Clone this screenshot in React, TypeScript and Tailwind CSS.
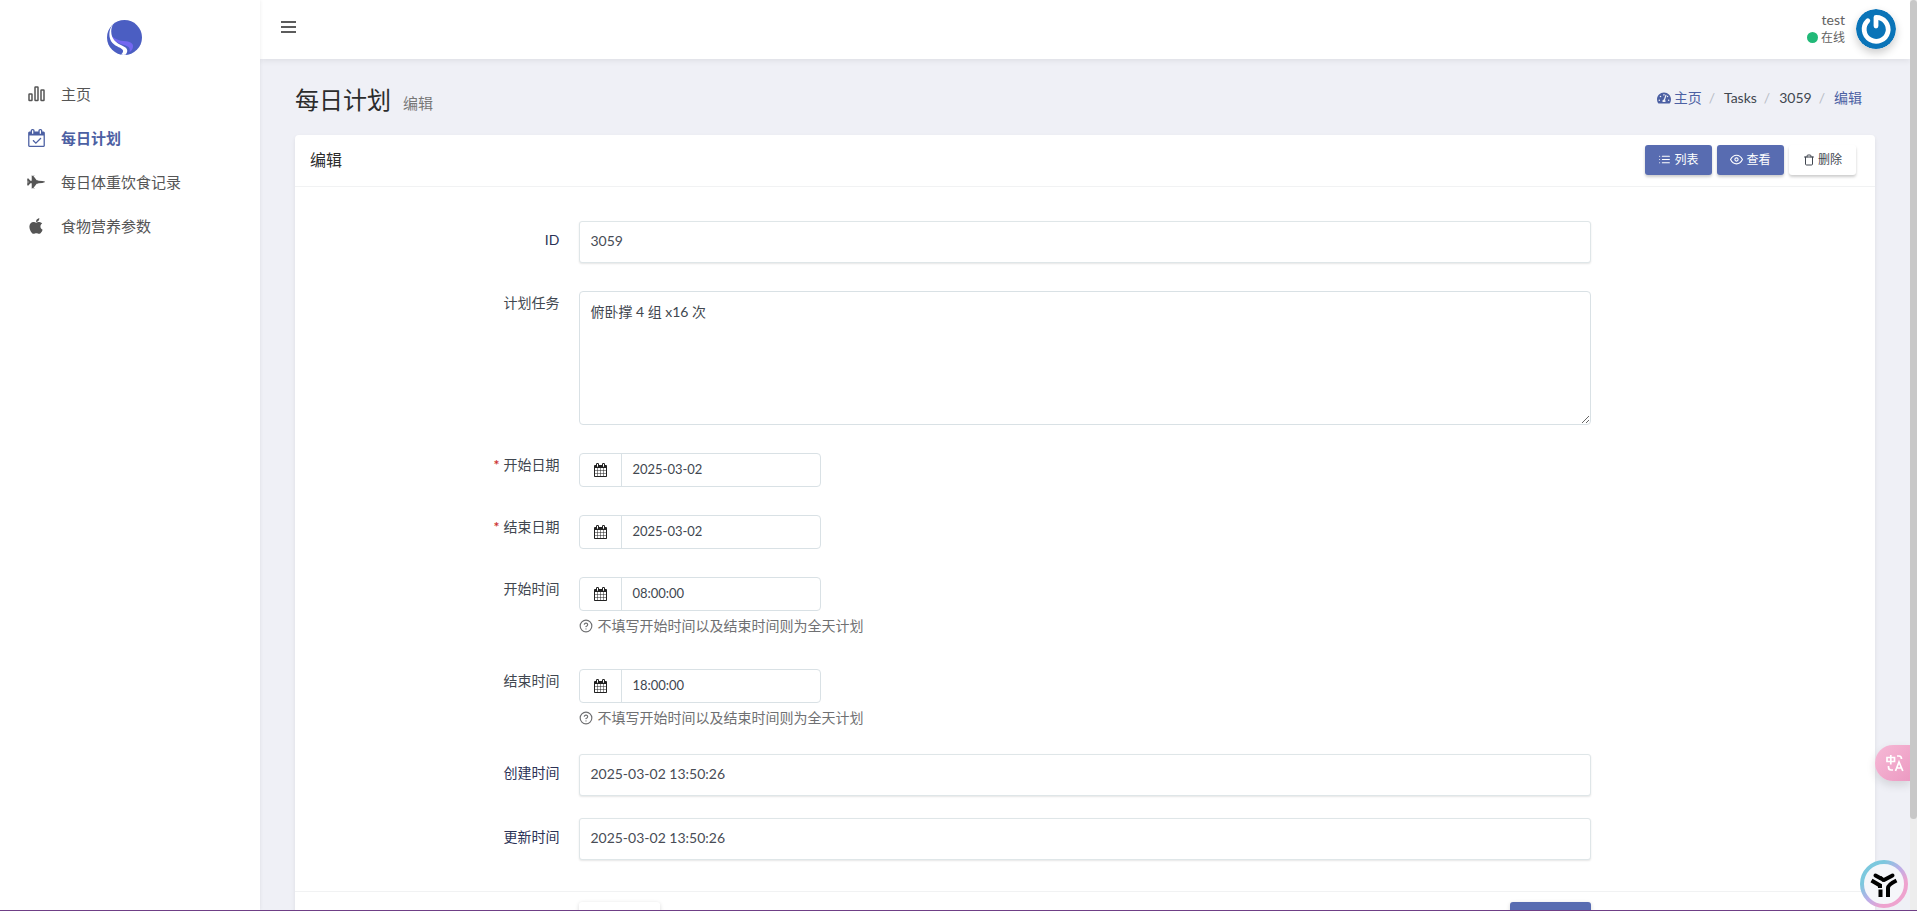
import React from "react";
import { FaApple, FaFighterJet, FaTachometerAlt } from "react-icons/fa";
import { FiEye, FiHelpCircle, FiList, FiTrash } from "react-icons/fi";

const Logo: React.FC = () => (
  <svg width="35" height="35" viewBox="0 0 35 35" fill="none">
    <circle cx="17.5" cy="17.5" r="17.5" fill="#4b5ec2" />
    <path
      d="M3.500 14C6 19 12 20.800 19 21.300C24 21.800 26.500 24 26 27C25.500 29.500 24.200 31.300 22.500 32C23.500 28 22 26.500 17 25C10 23 5 20 3.500 14Z"
      fill="#7367f0"
    />
    <path
      d="M6 4.500C1.500 9 1 18 5.500 23C9 27 15 27.500 16 30.500C16.300 32 15.300 33.500 14 34.600C16 35.100 17.500 35 18.500 34.800C20.500 32.500 21 29.500 18.800 27.700C16 25.500 11 24.500 7.500 20.500C4 16.500 3 10 6 4.500Z"
      fill="white"
    />
  </svg>
);

const BarsIcon: React.FC = () => (
  <svg width="17" height="16" viewBox="0 0 17 16" fill="none" stroke="#555" strokeWidth="1.500">
    <rect x="1" y="8" width="3" height="6.500" rx="0.500" />
    <rect x="7" y="1" width="3" height="13.500" rx="0.500" />
    <rect x="13" y="4" width="3" height="10.500" rx="0.500" />
  </svg>
);

const CalendarCheckIcon: React.FC = () => (
  <svg width="17" height="18" viewBox="0 0 1664 1792" fill="currentColor">
    <path d="M1303 964l-512 512q-10 9-23 9t-23-9l-288-288q-9-10-9-23t9-22l46-46q9-9 22-9t23 9l220 220 444-444q10-9 23-9t22 9l46 46q9 9 9 22t-9 23zm-1175 700h1408v-1024h-1408v1024zm384-1216v-288q0-13-9.500-22.500t-22.500-9.500h-64q-13 0-22.500 9.500t-9.500 22.500v288q0 13 9.500 22.500t22.500 9.500h64q13 0 22.500-9.500t9.500-22.500zm768 0v-288q0-13-9.500-22.500t-22.500-9.500h-64q-13 0-22.500 9.500t-9.500 22.500v288q0 13 9.500 22.500t22.500 9.500h64q13 0 22.500-9.500t9.500-22.500zm384-64v1280q0 52-38 90t-90 38h-1408q-52 0-90-38t-38-90v-1280q0-52 38-90t90-38h128v-96q0-66 47-113t113-47h64q66 0 113 47t47 113v96h384v-96q0-66 47-113t113-47h64q66 0 113 47t47 113v96h128q52 0 90 38t38 90z" />
  </svg>
);

const CalendarIcon: React.FC = () => (
  <svg width="13" height="14" viewBox="0 0 1664 1792" fill="#222">
    <path d="M128 1664h288v-288h-288v288zm352 0h320v-288h-320v288zm-352-352h288v-320h-288v320zm352 0h320v-320h-320v320zm-352-384h288v-288h-288v288zm736 736h320v-288h-320v288zm-384-736h320v-288h-320v288zm768 736h288v-288h-288v288zm-384-352h320v-320h-320v320zm-352-864v-288q0-13-9.500-22.500t-22.500-9.500h-64q-13 0-22.500 9.500t-9.500 22.500v288q0 13 9.500 22.500t22.500 9.500h64q13 0 22.500-9.500t9.500-22.500zm736 864h288v-320h-288v320zm-384-384h320v-288h-320v288zm384 0h288v-288h-288v288zm32-480v-288q0-13-9.500-22.500t-22.500-9.500h-64q-13 0-22.500 9.500t-9.500 22.500v288q0 13 9.500 22.500t22.500 9.500h64q13 0 22.500-9.500t9.500-22.500zm384-64v1280q0 52-38 90t-90 38h-1408q-52 0-90-38t-38-90v-1280q0-52 38-90t90-38h128v-96q0-66 47-113t113-47h64q66 0 113 47t47 113v96h384v-96q0-66 47-113t113-47h64q66 0 113 47t47 113v96h128q52 0 90 38t38 90z" />
  </svg>
);

const Avatar: React.FC = () => (
  <svg
    width="40"
    height="40"
    viewBox="0 0 40 40"
    fill="none"
    className="rounded-full shadow-[0_4px_8px_rgba(0,0,0,0.2)]"
  >
    <circle cx="20" cy="20" r="20" fill="#0a74b8" />
    <path
      d="M11.800 11.700A12 12 0 1 0 20 8.300V17"
      stroke="white"
      strokeWidth="4.800"
      strokeLinecap="round"
      strokeLinejoin="round"
    />
  </svg>
);

const TranslateIcon: React.FC = () => (
  <svg width="18" height="18" viewBox="0 0 18 18" fill="none" stroke="white" strokeWidth="1.700">
    <path d="M1 3.500H8.500V7.500H1ZM4.800 1V10.500" />
    <path d="M11 2H13Q15.500 2 15.500 5M2.500 12V13Q2.500 16 5 16H7" />
    <path d="M9.500 17L13 8L16.800 17M10.500 14H15.800" />
  </svg>
);

const AssistantIcon: React.FC = () => (
  <svg width="48" height="48" viewBox="0 0 48 48" fill="none">
    <defs>
      <linearGradient id="ring" x1="8" y1="8" x2="40" y2="40" gradientUnits="userSpaceOnUse">
        <stop offset="0.150" stopColor="#7cc8de" />
        <stop offset="0.500" stopColor="#bcaee8" />
        <stop offset="0.800" stopColor="#eea3cf" />
      </linearGradient>
    </defs>
    <circle cx="24" cy="24" r="22" fill="#f5f6fa" stroke="url(#ring)" strokeWidth="4" />
    <g stroke="black" strokeWidth="4">
      <path d="M15.500 15.500L20.500 18.200M32.500 15.500L24 20" strokeLinecap="round" />
      <path d="M20 17.500L24 20.500" />
      <path d="M11.500 20.500L20 25.500V28M36.500 20.500Q28 24.500 28 28V37" />
      <path d="M20.500 29.500V37" />
    </g>
  </svg>
);

const menu = [
  { title: "主页", icon: <BarsIcon />, active: false },
  { title: "每日计划", icon: <CalendarCheckIcon />, active: true },
  { title: "每日体重饮食记录", icon: <FaFighterJet size={18} />, active: false },
  { title: "食物营养参数", icon: <FaApple size={18} />, active: false },
];

const Sidebar: React.FC = () => (
  <aside className="z-10 w-[260px] shrink-0 bg-white shadow-[0_0_4px_rgba(0,0,0,0.08)]">
    <a href="#" aria-label="Logo" className="flex h-[72px] justify-center pr-3 pt-5">
      <Logo />
    </a>
    <nav>
      {menu.map((item) => (
        <a
          key={item.title}
          href="#"
          className={
            item.active
              ? "flex h-11 items-center pl-6 text-[15px] font-bold text-[#4c60a3]"
              : "flex h-11 items-center pl-6 text-[15px] text-[#555]"
          }
        >
          <span className="flex w-6 justify-center">{item.icon}</span>
          <span className="pl-[13px]">{item.title}</span>
        </a>
      ))}
    </nav>
  </aside>
);

const Navbar: React.FC = () => (
  <header className="flex h-[59px] shrink-0 items-center justify-between bg-white pb-[2px] pl-5 pr-[14px] shadow-[0_2px_6px_rgba(0,0,0,0.07)]">
    <button type="button" aria-label="Menu" className="pb-[3px]">
      <svg width="17" height="14" viewBox="0 0 17 14" fill="#5c5c5c">
        <rect x="1" y="1" width="15" height="2" />
        <rect x="1" y="6" width="15" height="2" />
        <rect x="1" y="11" width="15" height="2" />
      </svg>
    </button>
    <a href="#" className="flex items-center gap-[11px] text-[#626262]">
      <span className="text-right">
        <span className="block text-sm leading-[18px]">test</span>
        <span className="flex items-center gap-[3px] text-xs leading-[18px]">
          <i className="size-[11px] rounded-full bg-[#21b978]" />
          在线
        </span>
      </span>
      <Avatar />
    </a>
  </header>
);

const Slash: React.FC = () => <span className="pl-[7px] pr-[9px] text-[#b8bdc6]">/</span>;

const Breadcrumb: React.FC = () => (
  <nav className="flex items-center pb-[3px] text-sm text-[#414750]">
    <a href="#" className="flex items-center gap-[3px] text-[#4c60a3]">
      <FaTachometerAlt size={14} />
      主页
    </a>
    <Slash />
    <span>Tasks</span>
    <Slash />
    <span>3059</span>
    <Slash />
    <a href="#" className="text-[#4c60a3]">
      编辑
    </a>
  </nav>
);

type RowProps = {
  id: string;
  label: string;
  required?: boolean;
  plain?: boolean;
  help?: string;
  className?: string;
  children: React.ReactNode;
};

const Row: React.FC<RowProps> = ({ id, label, required, plain, help, className, children }) => (
  <div className={`grid grid-cols-[18%_64%] ${className ?? "mb-7"}`}>
    <label
      htmlFor={id}
      className={
        plain
          ? "pr-5 pt-[7px] text-right text-sm leading-6 text-[#2c3256]"
          : "pr-5 text-right text-sm leading-6 text-[#414750]"
      }
    >
      {required && <span className="pr-1 font-bold text-[#c33]">*</span>}
      {label}
    </label>
    <div>
      {children}
      {help && (
        <p className="flex h-[30px] items-center gap-1 text-sm leading-5 text-[#6f7072]">
          <FiHelpCircle size={14} />
          {help}
        </p>
      )}
    </div>
  </div>
);

const ReadonlyBox: React.FC<{ id: string; value: string }> = ({ id, value }) => (
  <input
    id={id}
    readOnly
    defaultValue={value}
    className="block h-[42px] w-full rounded-[3px] border border-[#dfe6e8] bg-white px-[10px] pb-1 text-sm text-[#484c55] shadow-[0_1px_2px_rgba(0,0,0,0.1)]"
  />
);

const PickerInput: React.FC<{ id: string; value: string }> = ({ id, value }) => (
  <div className="flex h-[34px] w-[242px] rounded-[4px] border border-[#d9e1e5]">
    <span className="flex w-[42px] items-center justify-center border-r border-[#d9e1e5]">
      <CalendarIcon />
    </span>
    <input
      id={id}
      defaultValue={value}
      className="min-w-0 flex-1 bg-transparent px-[10px] text-[13px] text-[#414750] outline-none"
    />
  </div>
);

const helpText = "不填写开始时间以及结束时间则为全天计划";

const EditForm: React.FC = () => (
  <form>
    <div className="pt-[34px] pb-[31px]">
      <Row id="id" label="ID" plain>
        <ReadonlyBox id="id" value="3059" />
      </Row>
      <Row id="task" label="计划任务">
        <textarea
          id="task"
          defaultValue="俯卧撑 4 组 x16 次"
          className="block h-[134px] w-full resize rounded-[4px] border border-[#d9e1e5] px-[10px] py-[9px] text-sm leading-[21px] text-[#414750] outline-none"
        />
      </Row>
      <Row id="start_date" label="开始日期" required>
        <PickerInput id="start_date" value="2025-03-02" />
      </Row>
      <Row id="end_date" label="结束日期" required>
        <PickerInput id="end_date" value="2025-03-02" />
      </Row>
      <Row id="start_time" label="开始时间" help={helpText}>
        <PickerInput id="start_time" value="08:00:00" />
      </Row>
      <Row id="end_time" label="结束时间" help={helpText} className="mb-[21px]">
        <PickerInput id="end_time" value="18:00:00" />
      </Row>
      <Row id="created_at" label="创建时间" plain className="mb-[22px]">
        <ReadonlyBox id="created_at" value="2025-03-02 13:50:26" />
      </Row>
      <Row id="updated_at" label="更新时间" plain className="mb-0">
        <ReadonlyBox id="updated_at" value="2025-03-02 13:50:26" />
      </Row>
    </div>
    <div className="grid grid-cols-[18%_64%] border-t border-[#f1f2f3] pt-[10px]">
      <div className="col-start-2 flex justify-between">
        <button
          type="reset"
          aria-label="Reset"
          className="h-9 w-[81px] rounded-[3px] bg-white shadow-[0_1px_4px_rgba(0,0,0,0.15)]"
        />
        <button
          type="submit"
          aria-label="Submit"
          className="h-9 w-[81px] rounded-[3px] bg-[#586cb1] shadow-[0_1px_4px_rgba(0,0,0,0.15)]"
        />
      </div>
    </div>
  </form>
);

const toolClass =
  "flex h-[30px] w-[67px] items-center justify-center gap-[3px] rounded-[3px] text-xs shadow-[0_2px_3px_rgba(0,0,0,0.2)]";

const App: React.FC = () => {
  return (
    <div className="relative flex h-screen overflow-hidden border-b border-[#6f3f86] bg-[#eff0f6] font-[Lato,'Noto_Sans_CJK_SC',sans-serif]">
      <Sidebar />
      <div className="flex min-w-0 flex-1 flex-col">
        <Navbar />
        <main className="min-h-0 flex-1 overflow-hidden px-[35px]">
          <div className="flex h-[76px] items-center justify-between pr-[13px] pt-[5px]">
            <h1 className="flex items-baseline gap-3 text-2xl text-[#2c2c2c]">
              每日计划
              <small className="text-[15px] text-[#777]">编辑</small>
            </h1>
            <Breadcrumb />
          </div>
          <section className="rounded-[4px] bg-white shadow-[0_2px_4px_rgba(0,0,0,0.08)]">
            <div className="flex h-[52px] items-center justify-between border-b border-[#f1f2f3] pb-[2px] pl-[15px] pr-[19px]">
              <h2 className="text-base text-[#2c2c2c]">编辑</h2>
              <div className="flex gap-[5px]">
                <button type="button" className={`${toolClass} bg-[#586cb1] text-white`}>
                  <FiList size={13} />
                  列表
                </button>
                <button type="button" className={`${toolClass} bg-[#586cb1] text-white`}>
                  <FiEye size={13} />
                  查看
                </button>
                <button type="button" className={`${toolClass} bg-white text-[#414750]`}>
                  <FiTrash size={12} />
                  删除
                </button>
              </div>
            </div>
            <EditForm />
          </section>
        </main>
      </div>
      <div className="z-10 w-[7px] shrink-0 bg-[#ededed]">
        <div className="h-[90%] rounded-[4px] bg-[#c8c8c8]" />
      </div>
      <button
        type="button"
        aria-label="Translate"
        className="absolute right-[7px] top-[745px] flex h-9 w-[35px] items-center rounded-l-full bg-linear-to-br from-[#f6b9d6] to-[#ec9ac2] pl-[11px] shadow-[0_4px_10px_rgba(0,0,0,0.12)]"
      >
        <TranslateIcon />
      </button>
      <button type="button" aria-label="Assistant" className="absolute bottom-[2px] right-[9px] z-20">
        <AssistantIcon />
      </button>
    </div>
  );
};

export default App;
